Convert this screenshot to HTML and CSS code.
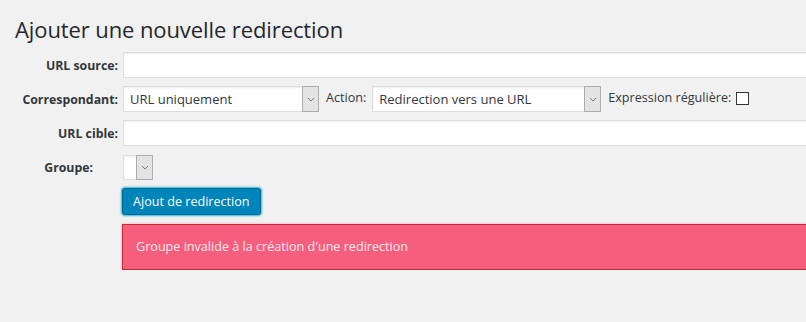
FILE: index.html
```html
<!DOCTYPE html>
<html lang="fr">
<head>
	<meta charset="UTF-8">
	<title>Redirection</title>
	<link rel="stylesheet" href="styles.css">
</head>
<body>

<div class="wrap">
	<h1 class="title">Ajouter une nouvelle redirection</h1>

	<div class="formGrid">
		<label class="lbl">URL source:</label>
		<input class="txt" type="text">

		<label class="lbl">Correspondant:</label>
		<div class="line">
			<div class="sel selMatch">
				<select><option>URL uniquement</option></select>
				<span class="arrow"><svg width="8" height="5" viewBox="0 0 8 5"><path d="M1 1 L4 4 L7 1" fill="none" stroke="#777" stroke-width="1"/></svg></span>
			</div>
			<span class="inlineLbl">Action:</span>
			<div class="sel selAction">
				<select><option>Redirection vers une URL</option></select>
				<span class="arrow"><svg width="8" height="5" viewBox="0 0 8 5"><path d="M1 1 L4 4 L7 1" fill="none" stroke="#777" stroke-width="1"/></svg></span>
			</div>
			<span class="inlineLbl">Expression régulière:</span>
			<span class="chk"></span>
		</div>

		<label class="lbl">URL cible:</label>
		<input class="txt" type="text">

		<label class="lbl lblGroup">Groupe:</label>
		<div class="line">
			<div class="sel selGroup">
				<select><option></option></select>
				<span class="arrow"><svg width="8" height="5" viewBox="0 0 8 5"><path d="M1 1 L4 4 L7 1" fill="none" stroke="#777" stroke-width="1"/></svg></span>
			</div>
		</div>

		<span></span>
		<div class="line">
			<button class="btn">Ajout de redirection</button>
		</div>

		<span></span>
		<div class="error">Groupe invalide à la création d'une redirection</div>
	</div>
</div>

</body>
</html>
```

FILE: styles.css
```css
/* base */
*{
	margin: 0;
	padding: 0;
	box-sizing: border-box;
}

body{
	background: #f1f1f1;
	font-family: "Open Sans", "Liberation Sans", sans-serif;
	color: #23282d;
	overflow: hidden;
}

.wrap{
	padding-top: 15px;
}

.title{
	font-size: 22px;
	font-weight: 400;
	line-height: 29px;
	padding-left: 15px;
	letter-spacing: -0.1px;
	color: #23282d;
}

/* form */
.formGrid{
	display: grid;
	grid-template-columns: 118px 1fr;
	column-gap: 5px;
	row-gap: 8px;
	margin-top: 8px;
	margin-right: -20px;
	align-items: center;
}

.lbl{
	font-size: 12.3px;
	font-weight: 700;
	text-align: right;
	color: #32373c;
}

.lblGroup{
	padding-right: 25px;
}

.txt{
	height: 26px;
	width: 100%;
	border: 1px solid #ddd;
	background: #fff;
	box-shadow: inset 0 1px 2px rgba(0,0,0,.07);
}

.line{
	display: flex;
	align-items: center;
	height: 26px;
}

.inlineLbl{
	font-size: 12.6px;
	color: #32373c;
	margin: 0 6px 0 7px;
	position: relative;
	top: -2px;
}

.sel{
	position: relative;
	height: 26px;
}

.sel select{
	appearance: none;
	-webkit-appearance: none;
	width: 100%;
	height: 100%;
	border: 1px solid #ddd;
	background: #fff;
	font-family: inherit;
	font-size: 13px;
	color: #32373c;
	padding: 0 20px 0 6px;
	box-shadow: inset 0 1px 2px rgba(0,0,0,.07);
}

.sel .arrow{
	position: absolute;
	right: 0;
	top: 0;
	width: 17px;
	height: 26px;
	background: #e3e3e3;
	border: 1px solid #adadad;
	display: flex;
	align-items: center;
	justify-content: center;
}

.selMatch{
	width: 196px;
}

.selAction{
	width: 229px;
}

.selGroup{
	width: 30px;
	height: 25px;
}

.selGroup .arrow{
	height: 25px;
}

.chk{
	width: 13px;
	height: 13px;
	border: 1px solid #333;
	background: #fff;
	margin-left: -1px;
	position: relative;
	top: -1px;
}

/* button */
.btn{
	height: 27px;
	padding: 0 10px;
	margin-left: -1px;
	background: #0085ba;
	border: 1px solid #006799;
	border-radius: 3px;
	color: #fff;
	font-family: inherit;
	font-size: 12.6px;
	box-shadow: 0 0 2px 1px #33b3db;
}

/* error */
.error{
	margin-left: -1px;
	margin-top: 2px;
	height: 46px;
	line-height: 44px;
	padding-left: 13px;
	background: #f65e7e;
	border: 1px solid #c52a3e;
	box-shadow: 0 0 2px 1px #fbc6d2;
	color: #fde9ee;
	font-size: 12.6px;
}
```
